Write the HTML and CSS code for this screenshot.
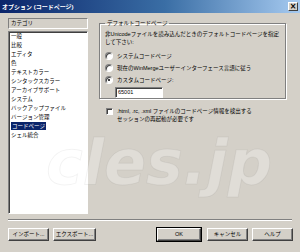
FILE: index.html
```html
<!DOCTYPE html>
<html lang="ja">
<head>
	<meta charset="UTF-8">
	<title>オプション (コードページ)</title>
	<link rel="stylesheet" href="styles.css">
</head>
<body>
	<div class="dialog">
		<div class="titlebar">
			<span class="title">オプション (コードページ)</span>
			<span class="close">×</span>
		</div>
		<div class="content">
			<div class="leftpane">
				<div class="cathead">カテゴリ</div>
				<ul class="catlist">
					<li>一般</li>
					<li>比較</li>
					<li>エディタ</li>
					<li>色</li>
					<li>テキストカラー</li>
					<li>シンタックスカラー</li>
					<li>アーカイブサポート</li>
					<li>システム</li>
					<li>バックアップファイル</li>
					<li>バージョン管理</li>
					<li><span class="selected">コードページ</span></li>
					<li>シェル統合</li>
				</ul>
			</div>
			<div class="rightpane">
				<fieldset class="group">
					<legend>デフォルトコードページ</legend>
					<p class="desc">非Unicodeファイルを読み込んだときのデフォルトコードページを指定<br>して下さい:</p>
					<div class="option"><span class="radio"></span>システムコードページ</div>
					<div class="option"><span class="radio"></span>現在のWinMergeユーザーインターフェース言語に従う</div>
					<div class="option"><span class="radio checked"></span>カスタムコードページ:</div>
					<div class="field">65001</div>
				</fieldset>
				<div class="check-row">
					<span class="checkbox"></span>
					<div class="check-text">.html, .rc, .xml ファイルのコードページ情報を検出する<br>セッションの再起動が必要です</div>
				</div>
			</div>
		</div>
		<div class="separator"></div>
		<div class="buttons">
			<div class="btn-group">
				<span class="btn">インポート...</span>
				<span class="btn wide">エクスポート...</span>
			</div>
			<div class="btn-group">
				<span class="btn default">OK</span>
				<span class="btn">キャンセル</span>
				<span class="btn">ヘルプ</span>
			</div>
		</div>
		<div class="watermark">cles.jp</div>
	</div>
</body>
</html>
```

FILE: styles.css
```css
html, body {
	margin: 0;
	padding: 0;
}
body {
	width: 300px;
	height: 252px;
	overflow: hidden;
	font-family: "Liberation Sans", "Noto Sans CJK JP", sans-serif;
	font-size: 5.5px;
	color: #000;
}
.dialog {
	position: relative;
	width: 300px;
	height: 252px;
	background: #d4d0c8;
	display: flex;
	flex-direction: column;
	overflow: hidden;
}
.titlebar {
	height: 13px;
	display: flex;
	align-items: center;
	justify-content: space-between;
	padding: 0 2px 0 2px;
	background: linear-gradient(to right, #0a246a, #3a6ea5 55%, #a6caf0);
}
.title {
	color: #fff;
	font-weight: bold;
	font-size: 6px;
}
.close {
	width: 8px;
	height: 7px;
	background: #d4d0c8;
	border: 1px solid;
	border-color: #fff #404040 #404040 #fff;
	font-size: 8px;
	line-height: 7px;
	text-align: center;
	font-weight: bold;
	font-family: "DejaVu Sans", sans-serif;
}
.content {
	display: flex;
	padding: 5px 8px 0 8px;
	height: 196px;
}
.leftpane {
	width: 80px;
	display: flex;
	flex-direction: column;
	gap: 2px;
}
.cathead {
	height: 9px;
	line-height: 9px;
	padding-left: 2px;
	border: 1px solid;
	border-color: #808080 #fff #fff #808080;
}
.catlist {
	flex: 1;
	margin: 0;
	padding: 0 0 0 2px;
	list-style: none;
	background: #fff;
	border: 1px solid;
	border-color: #808080 #fff #fff #808080;
	box-shadow: inset 1px 1px #404040;
}
.catlist li {
	height: 9px;
	line-height: 9px;
	white-space: nowrap;
}
.selected {
	display: inline-block;
	background: #0a246a;
	color: #fff;
	padding: 0 1px;
	line-height: 8px;
}
.rightpane {
	margin-left: 11px;
	padding-top: 1px;
	width: 187px;
}
.group {
	margin: 0;
	padding: 3px 5px 4px 5px;
	height: 71px;
	border: 1px solid #808080;
	box-shadow: inset 1px 1px #fff, 1px 1px #fff;
}
.group legend {
	padding: 0 2px;
	line-height: 8px;
}
.desc {
	margin: 0 0 4px 0;
	line-height: 8px;
}
.option {
	display: flex;
	align-items: center;
	gap: 4px;
	height: 12px;
	white-space: nowrap;
}
.radio {
	width: 6px;
	height: 6px;
	border-radius: 50%;
	background: #fff;
	border: 1px solid;
	border-color: #808080 #fff #fff #808080;
	box-shadow: inset 1px 1px #404040;
	position: relative;
}
.radio.checked::after {
	content: "";
	position: absolute;
	left: 2px;
	top: 2px;
	width: 2px;
	height: 2px;
	border-radius: 50%;
	background: #000;
}
.field {
	margin: 1px 0 0 10px;
	width: 44px;
	height: 9px;
	line-height: 9px;
	padding-left: 2px;
	background: #fff;
	border: 1px solid;
	border-color: #808080 #fff #fff #808080;
	box-shadow: inset 1px 1px #404040;
}
.check-row {
	display: flex;
	gap: 4px;
	margin-top: 8px;
	padding-left: 7px;
}
.checkbox {
	width: 5px;
	height: 5px;
	margin-top: 1px;
	background: #fff;
	border: 1px solid;
	border-color: #808080 #fff #fff #808080;
	box-shadow: inset 1px 1px #404040;
}
.check-text {
	line-height: 8px;
}
.separator {
	margin: 5px 8px 0 8px;
	height: 0;
	border-top: 1px solid #808080;
	border-bottom: 1px solid #fff;
}
.buttons {
	display: flex;
	justify-content: space-between;
	padding: 7px 7px 0 8px;
}
.btn-group {
	display: flex;
	gap: 4px;
}
.btn {
	width: 39px;
	height: 11px;
	line-height: 11px;
	text-align: center;
	border: 1px solid;
	border-color: #fff #404040 #404040 #fff;
	box-shadow: inset -1px -1px #808080;
	white-space: nowrap;
}
.btn.wide {
	width: 41px;
}
.btn.default {
	outline: 1px solid #000;
	width: 42px;
	margin-right: 2px;
}
.watermark {
	position: absolute;
	left: 46px;
	top: 132px;
	line-height: 1;
	font-family: "DejaVu Sans", sans-serif;
	font-weight: bold;
	font-style: italic;
	font-size: 62px;
	color: rgba(255, 255, 255, 0.28);
	-webkit-text-stroke: 1px rgba(0, 0, 0, 0.05);
	pointer-events: none;
}
```
